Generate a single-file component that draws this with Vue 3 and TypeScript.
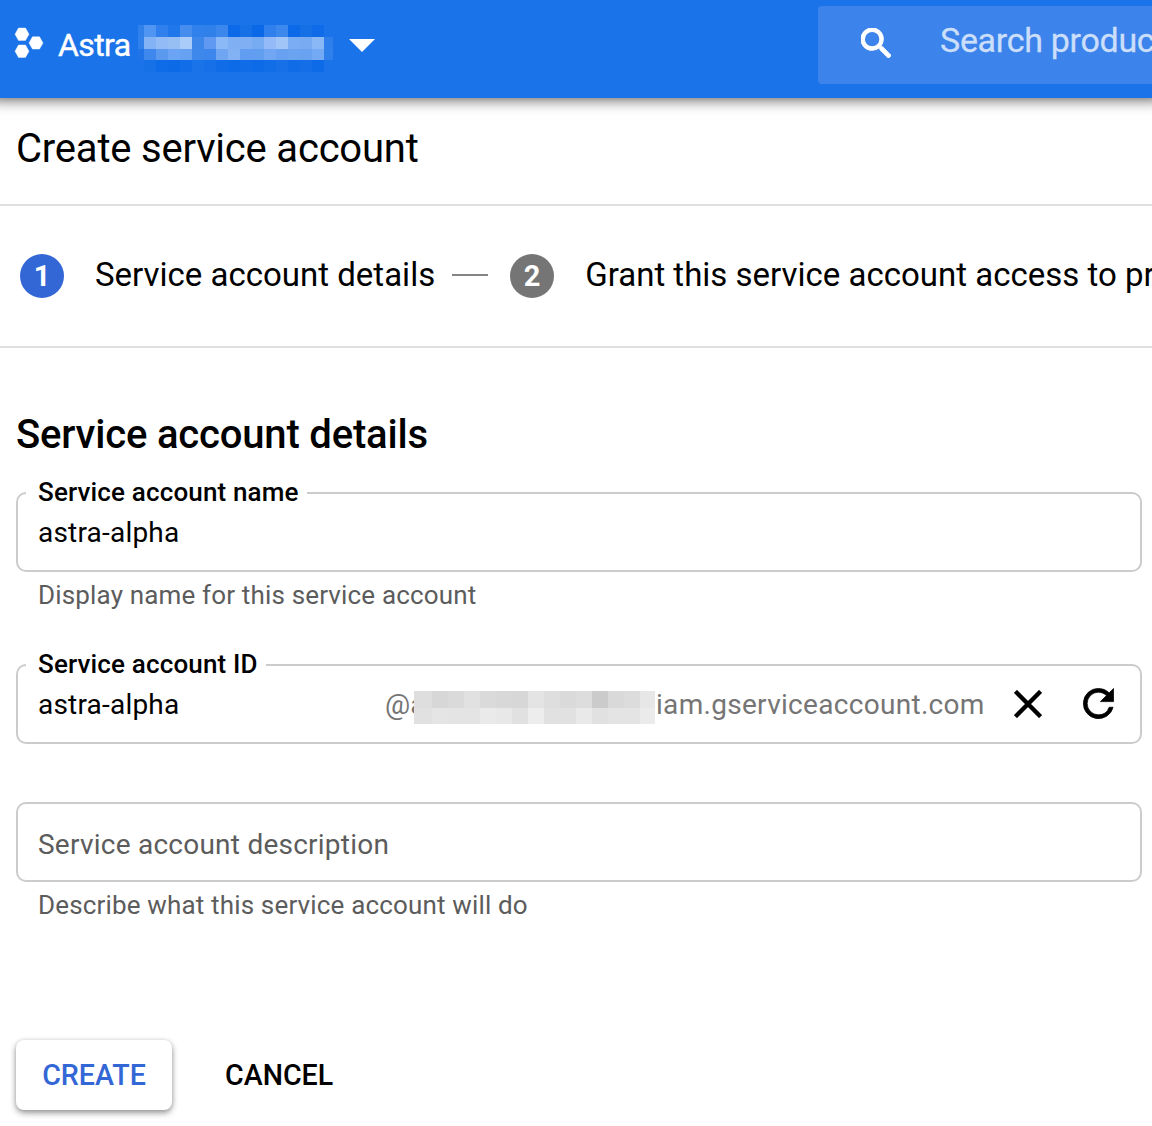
<script setup lang="ts">
import { ref } from 'vue'

interface Step {
  label: string
  active: boolean
}

const steps: Step[] = [
  { label: 'Service account details', active: true },
  { label: 'Grant this service account access to project', active: false },
]

const accountName = ref('astra-alpha')
const accountId = ref('astra-alpha')

const projectMask: string[][] = [
  ['#3080ea', '#5095f1', '#2f80ec', '#2077e9', '#468dee', '#3181ec', '#3080e9', '#3b87eb', '#0c6ae8', '#1670e6', '#0b69e8', '#2f7fec', '#3c88ed', '#0c69e8', '#1570e6', '#0f6be8', '#1a73e8'],
  ['#3181ea', '#83b2f5', '#93bbf5', '#97bff4', '#aaccf8', '#3d87ea', '#6099f1', '#8bb8f6', '#80b0f3', '#80b0f3', '#77acf3', '#94bbf7', '#a2c5f8', '#7aadf3', '#78abf2', '#8ab8f6', '#2e7fea'],
  ['#2074e8', '#3e88ed', '#5b99ef', '#6ba4f4', '#67a1f1', '#3f88eb', '#3d86eb', '#70a6f1', '#82b2f4', '#619df0', '#629eef', '#70a6f3', '#68a1f2', '#6aa4f1', '#69a2f0', '#74aaf4', '#2f80ea'],
  ['#1a73e8', '#1670e6', '#0f6ce8', '#0d6ae7', '#116ee8', '#1a73e8', '#1770e7', '#116de7', '#0e6be7', '#116de7', '#0d6be7', '#126ee7', '#1770e7', '#106de7', '#136ee7', '#0e6be7', '#1a73e8'],
]

const domainMask: string[][] = [
  ['#dedede', '#d7d7d7', '#dadada', '#e1e1e1', '#dadada', '#d8d8d8', '#d7d7d7', '#e4e4e4', '#dedede', '#dadada', '#dddddd', '#cbcbcb', '#d9d9d9', '#dcdcdc', '#e7e7e7'],
  ['#e1e1e1', '#e5e5e5', '#e4e4e4', '#e4e4e4', '#eaeaea', '#e8e8e8', '#e1e1e1', '#ededed', '#e1e1e1', '#e1e1e1', '#e9e9e9', '#e1e1e1', '#e4e4e4', '#e4e4e4', '#ebebeb'],
]
</script>

<template>
  <div class="page">
    <header class="topbar">
      <svg class="logo" viewBox="0 0 30 32" width="30" height="32">
        <path d="M4.500 1h7l3.500 6.200-3.500 6.200h-7L1 7.200zM4.500 18h7l3.500 6.200-3.500 6.200h-7L1 24.200zM18.500 9.700h7l3.500 6.200-3.500 6.200h-7L15 15.900z" fill="#fff" stroke="#fff" stroke-width=".4" stroke-linejoin="round" />
      </svg>
      <span class="project">Astra</span>
      <div class="project-mask">
        <div v-for="(row, r) in projectMask" :key="r" class="mask-row">
          <i v-for="(color, c) in row" :key="c" :style="{ background: color }"></i>
        </div>
      </div>
      <svg class="caret" viewBox="0 0 26 13" width="26" height="13"><path d="M0 0h26L13 13z" fill="#fff" /></svg>
      <div class="search">
        <svg viewBox="3 3 17.490 17.490" width="30" height="30">
          <path d="M15.500 14h-.79l-.28-.27A6.471 6.471 0 0 0 16 9.500 6.500 6.500 0 1 0 9.500 16c1.610 0 3.090-.59 4.230-1.570l.27.28v.79l5 4.990L20.490 19l-4.990-5zm-6 0C7.010 14 5 11.990 5 9.500S7.010 5 9.500 5 14 7.010 14 9.500 11.990 14 9.500 14z" fill="#fff" stroke="#fff" stroke-width=".6" />
        </svg>
        <span>Search products</span>
      </div>
    </header>

    <h1>Create service account</h1>

    <nav class="steps">
      <template v-for="(step, i) in steps" :key="i">
        <span v-if="i > 0" class="connector"></span>
        <span class="badge" :class="{ active: step.active }">{{ i + 1 }}</span>
        <span class="step-label">{{ step.label }}</span>
      </template>
    </nav>

    <main>
      <h2>Service account details</h2>

      <fieldset class="field name-field">
        <legend>Service account name</legend>
        <div class="field-row">
          <span class="value">{{ accountName }}</span>
        </div>
      </fieldset>
      <p class="hint">Display name for this service account</p>

      <fieldset class="field id-field">
        <legend>Service account ID</legend>
        <div class="field-row">
          <span class="value id-value">{{ accountId }}</span>
          <span class="at">@a</span>
          <div class="domain-mask">
            <div v-for="(row, r) in domainMask" :key="r" class="mask-row">
              <i v-for="(color, c) in row" :key="c" :style="{ background: color }"></i>
            </div>
          </div>
          <span class="domain">iam.gserviceaccount.com</span>
          <svg class="clear" viewBox="0 0 28 28" width="28" height="28"><path d="M1.400 1.400 26.600 26.600M26.600 1.400 1.400 26.600" stroke="#000" stroke-width="4.400" /></svg>
          <svg class="refresh" viewBox="3.800 3.800 16.400 16.400" width="31" height="31">
            <path d="M17.650 6.350A7.958 7.958 0 0 0 12 4a8 8 0 1 0 7.730 10h-2.080A5.990 5.990 0 0 1 12 18a6 6 0 1 1 0-12c1.660 0 3.140.69 4.220 1.780L13 11h7V4z" stroke="#000" stroke-width=".4" />
          </svg>
        </div>
      </fieldset>

      <div class="field description">Service account description</div>
      <p class="hint">Describe what this service account will do</p>

      <div class="actions">
        <button class="create">CREATE</button>
        <button class="cancel">CANCEL</button>
      </div>
    </main>
  </div>
</template>

<style>
body {
  margin: 0;
  background: #fff;
}
</style>

<style scoped>
.page {
  width: 100%;
  height: 1126px;
  overflow: hidden;
  background: #fff;
  color: #000;
  font-family: Roboto, sans-serif;
}
.page * {
  box-sizing: border-box;
}
svg {
  display: block;
  flex: none;
}
span {
  white-space: nowrap;
}
.topbar {
  position: relative;
  display: flex;
  align-items: flex-start;
  height: 98px;
  background: #1a73e8;
  color: #fff;
  box-shadow: 0 -9px 14px 10px rgba(0, 0, 0, 0.7);
}
.logo {
  margin: 27px 0 0 14px;
}
.project {
  width: 80px;
  margin: 25px 0 0 14px;
  font-size: 32px;
  line-height: 40px;
  letter-spacing: -0.6px;
  -webkit-text-stroke: 0.4px currentColor;
}
.project-mask {
  width: 195px;
  height: 47px;
  margin-top: 25px;
  display: flex;
  flex-direction: column;
}
.mask-row {
  display: flex;
  flex: 1;
}
.mask-row i {
  flex: none;
  width: 12px;
}
.project-mask i:first-child {
  width: 6px;
}
.project-mask i:last-child {
  width: 9px;
}
.caret {
  margin: 39px 0 0 16px;
}
.search {
  display: flex;
  align-items: center;
  width: 334px;
  height: 78px;
  margin: 6px 0 0 auto;
  padding: 0 0 4px 43px;
  border-radius: 4px 0 0 4px;
  background: #3c83eb;
  overflow: hidden;
}
.search span {
  margin: -7px 0 0 49px;
  font-size: 34px;
  line-height: 40px;
  letter-spacing: -0.3px;
  color: #cbdefa;
  -webkit-text-stroke: 0.3px currentColor;
}
h1 {
  height: 108px;
  margin: 0;
  padding: 26px 0 0 16px;
  border-bottom: 2px solid #e0e0e0;
  font-size: 40px;
  font-weight: 400;
  line-height: 50px;
  letter-spacing: -0.2px;
}
.steps {
  display: flex;
  align-items: center;
  height: 142px;
  padding: 0 0 0 20px;
  border-bottom: 2px solid #e0e0e0;
  overflow: hidden;
}
.badge {
  flex: none;
  width: 44px;
  height: 44px;
  border-radius: 50%;
  background: #757575;
  color: #fff;
  font-size: 29px;
  font-weight: 700;
  line-height: 45px;
  text-align: center;
}
.badge.active {
  background: #3367d6;
}
.step-label {
  margin: -2px 0 0 31px;
  font-size: 33px;
  line-height: 44px;
}
.connector {
  flex: none;
  width: 36px;
  height: 2px;
  margin: -2px 22px 0 17px;
  background: #858585;
}
main {
  padding: 60px 10px 0 16px;
}
h2 {
  margin: 0;
  font-size: 40px;
  font-weight: 500;
  line-height: 54px;
  letter-spacing: -0.18px;
}
.field {
  min-width: 0;
  margin: 0;
  padding: 0 0 0 20px;
  border: 2px solid #ccc;
  border-radius: 10px;
}
fieldset.field {
  height: 94px;
  padding-left: 10px;
}
.field-row {
  display: flex;
  align-items: center;
  height: 50px;
}
.name-field {
  margin-top: 16px;
}
legend {
  height: 30px;
  margin-left: -2px;
  padding: 0 8px 0 12px;
  font-size: 26px;
  font-weight: 500;
  line-height: 28px;
  letter-spacing: 0.15px;
}
.value {
  margin-left: 10px;
  font-size: 28px;
  line-height: 36px;
  letter-spacing: 0.2px;
}
.hint {
  margin: 0;
  padding: 7px 0 0 22px;
  font-size: 26px;
  line-height: 32px;
  letter-spacing: 0.16px;
  color: #5c5c5c;
}
.id-field {
  margin-top: 39px;
}
.id-value {
  flex: none;
  width: 347px;
}
.at {
  flex: none;
  width: 29px;
  overflow: hidden;
  font-size: 28px;
  line-height: 36px;
  color: #757575;
}
.domain-mask {
  display: flex;
  flex: none;
  flex-direction: column;
  width: 241px;
  height: 33px;
  margin-top: 5px;
}
.domain-mask i {
  width: 16px;
}
.domain-mask i:first-child {
  width: 18px;
}
.domain-mask i:last-child {
  width: 15px;
}
.domain {
  width: 358px;
  padding-left: 1px;
  font-size: 28px;
  line-height: 36px;
  letter-spacing: 0.3px;
  color: #757575;
}
.clear {
  margin: -2px 0 0 1px;
}
.refresh {
  margin: -3px 0 0 41px;
}
.description {
  height: 80px;
  margin-top: 58px;
  padding-top: 23px;
  font-size: 28px;
  line-height: 36px;
  letter-spacing: 0.24px;
  color: #5c5c5c;
}
.actions {
  display: flex;
  margin-top: 119px;
}
button {
  height: 70px;
  padding: 0;
  border: 0;
  border-radius: 8px;
  background: transparent;
  font: 500 28.600px/70px Roboto, sans-serif;
  color: #000;
}
.create {
  width: 156px;
  background: #fff;
  color: #3367d6;
  box-shadow: 0 3px 6px rgba(0, 0, 0, 0.4), 0 0 4px rgba(0, 0, 0, 0.1);
}
.cancel {
  margin-left: 53px;
}
</style>
